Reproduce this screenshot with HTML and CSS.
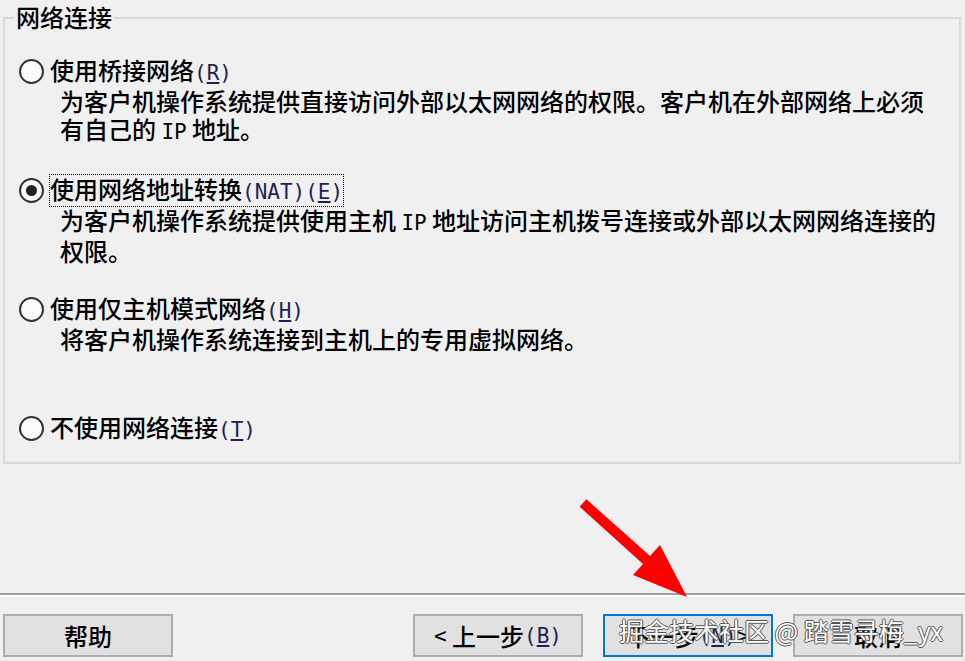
FILE: index.html
```html
<!DOCTYPE html>
<html lang="zh-CN">
<head>
<meta charset="utf-8">
<title>网络类型</title>
<link rel="stylesheet" href="styles.css">
</head>
<body>
<div class="dialog">
  <div class="group">
    <span class="legend">网络连接</span>
    <div class="option">
      <div class="choice"><span class="radio"></span><span class="label">使用桥接网络<span class="lat key">(<u>R</u>)</span></span></div>
      <p class="desc">为客户机操作系统提供直接访问外部以太网网络的权限。客户机在外部网络上必须<br>有自己的 <span class="lat">IP</span> 地址。</p>
    </div>
    <div class="option">
      <div class="choice"><span class="radio checked"></span><span class="label focus">使用网络地址转换<span class="lat key">(NAT)(<u>E</u>)</span></span></div>
      <p class="desc">为客户机操作系统提供使用主机 <span class="lat">IP</span> 地址访问主机拨号连接或外部以太网网络连接的<br>权限。</p>
    </div>
    <div class="option">
      <div class="choice"><span class="radio"></span><span class="label">使用仅主机模式网络<span class="lat key">(<u>H</u>)</span></span></div>
      <p class="desc">将客户机操作系统连接到主机上的专用虚拟网络。</p>
    </div>
    <div class="option last">
      <div class="choice"><span class="radio"></span><span class="label">不使用网络连接<span class="lat key">(<u>T</u>)</span></span></div>
    </div>
  </div>
  <div class="sep"></div>
  <div class="buttons">
    <button class="btn help">帮助</button>
    <div class="nav">
      <button class="btn"><span class="lat">&lt;</span> 上一步<span class="lat key">(<u>B</u>)</span></button>
      <button class="btn primary">下一步<span class="lat key">(<u>N</u>)</span> <span class="lat">&gt;</span></button>
      <button class="btn">取消</button>
    </div>
  </div>
  <div class="watermark">掘金技术社区 @ 踏雪寻梅_yx</div>
  <svg class="arrow" width="965" height="661" viewBox="0 0 965 661" aria-hidden="true">
    <polygon points="579.6,506.7 643,564 633,575 687,597 660,545 650,556 586.4,499.3" fill="#ff0000"/>
  </svg>
</div>
</body>
</html>
```
FILE: styles.css
```css
html, body {
  margin: 0;
  padding: 0;
  background: #f0f0f0;
}
body {
  font-family: "Noto Sans CJK SC", "Liberation Sans", sans-serif;
  font-size: 24px;
  font-weight: 500;
  color: #000;
}
.dialog {
  position: relative;
  width: 965px;
  height: 661px;
  overflow: hidden;
  display: flex;
  flex-direction: column;
}
.group {
  position: relative;
  margin: 17px 4px 0 3px;
  height: 447px;
  box-sizing: border-box;
  border: 2px solid #dadada;
  padding: 36px 0 0 14px;
}
.legend {
  position: absolute;
  top: -15px;
  left: 9px;
  padding: 0 2px;
  background: #f0f0f0;
  line-height: 26px;
}
.option {
  height: 119px;
}
.option.last {
  height: auto;
}
.choice {
  display: flex;
  align-items: center;
  gap: 6px;
  height: 32px;
}
.radio {
  flex: none;
  width: 25px;
  height: 25px;
  box-sizing: border-box;
  border: 2px solid #333;
  border-radius: 50%;
  background: #fbfbfb;
  display: flex;
  align-items: center;
  justify-content: center;
}
.radio.checked::after {
  content: "";
  width: 11px;
  height: 11px;
  border-radius: 50%;
  background: #222;
}
.label {
  line-height: 28px;
  white-space: nowrap;
}
.label.focus {
  outline: 1px dotted #000;
  outline-offset: 0;
}
.desc {
  margin: 0;
  padding-left: 41px;
  line-height: 28px;
  white-space: nowrap;
}
.lat {
  font-family: "DejaVu Sans Mono", monospace;
  font-size: 21px;
  font-weight: 400;
}
.key {
  color: #1f1f55;
}
.sep {
  margin-top: 129px;
  border-top: 2px solid #a0a0a0;
  border-bottom: 2px solid #ffffff;
}
.buttons {
  display: flex;
  justify-content: space-between;
  margin-top: 17px;
  padding: 0 2px 0 3px;
}
.nav {
  display: flex;
  gap: 20px;
}
.btn {
  width: 170px;
  height: 43px;
  box-sizing: border-box;
  border: 2px solid #adadad;
  background: #e1e1e1;
  color: #000;
  font-family: "Noto Sans CJK SC", "Liberation Sans", sans-serif;
  font-size: 24px;
  font-weight: 500;
  line-height: 28px;
  padding: 0;
  display: flex;
  align-items: center;
  justify-content: center;
  white-space: pre;
}
.btn.primary {
  border-color: #0078d7;
}
.watermark {
  position: absolute;
  left: 619px;
  top: 615px;
  font-size: 25px;
  font-weight: 400;
  line-height: 30px;
  color: #ffffff;
  white-space: nowrap;
  text-shadow: 1px 0 0 #555, -1px 0 0 #555, 0 1px 0 #555, 0 -1px 0 #555;
}
.arrow {
  position: absolute;
  left: 0;
  top: 0;
  pointer-events: none;
}
```
